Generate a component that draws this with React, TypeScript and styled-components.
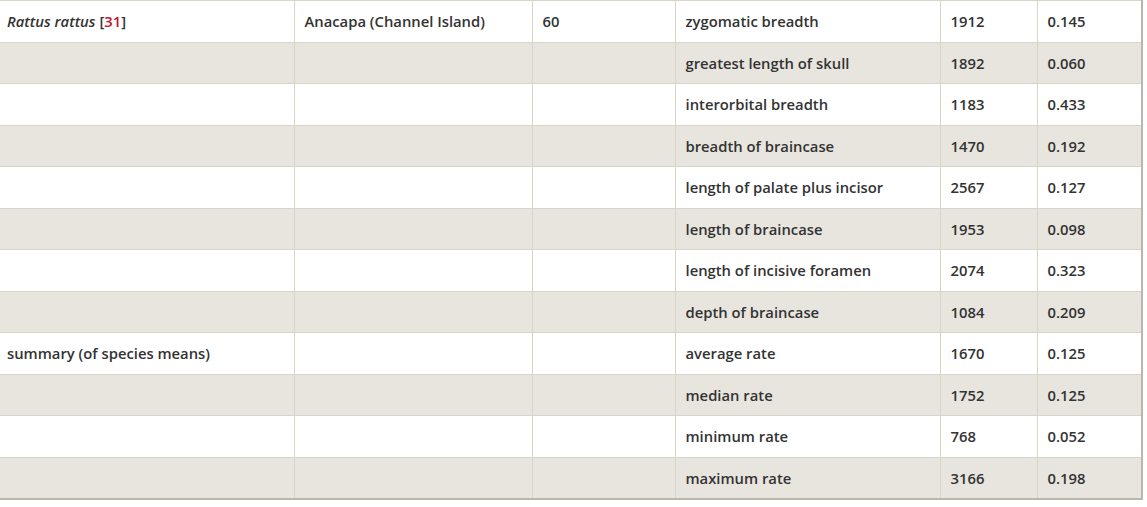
import React from "react";
import styled, { createGlobalStyle } from "styled-components";

const Global = createGlobalStyle`
  html, body { margin: 0; padding: 0; background: #fff; }
  body { font-family: "Open Sans", "Liberation Sans", sans-serif; overflow: hidden; }
`;

const Table = styled.table`
  border-collapse: collapse;
  table-layout: fixed;
  width: 1145px;
  margin-left: -3px;
  border-right: 2px solid #b9b6ad;
  border-bottom: 2px solid #b9b6ad;
  color: #333;
  font-size: 14.8px;
  font-weight: 600;
`;

const Col = styled.col<{ $w: number }>`
  width: ${(p) => p.$w}px;
`;

const Row = styled.tr<{ $shaded: boolean }>`
  height: 41.5px;
  background: ${(p) => (p.$shaded ? "#e8e5df" : "#ffffff")};
`;

const Cell = styled.td`
  border: 1px solid #d8d4c6;
  padding: 0 10px;
  vertical-align: middle;
  white-space: nowrap;
  &:first-child { border-left: none; }
`;

const Species = styled.em`
  font-style: italic;
`;

const Ref = styled.span`
  color: #c41230;
`;

const widths = [297, 238, 143, 265, 97, 105];

const rows: [string, string, string][] = [
  ["zygomatic breadth", "1912", "0.145"],
  ["greatest length of skull", "1892", "0.060"],
  ["interorbital breadth", "1183", "0.433"],
  ["breadth of braincase", "1470", "0.192"],
  ["length of palate plus incisor", "2567", "0.127"],
  ["length of braincase", "1953", "0.098"],
  ["length of incisive foramen", "2074", "0.323"],
  ["depth of braincase", "1084", "0.209"],
  ["average rate", "1670", "0.125"],
  ["median rate", "1752", "0.125"],
  ["minimum rate", "768", "0.052"],
  ["maximum rate", "3166", "0.198"],
];

export default function App() {
  return (
    <>
      <Global />
      <Table>
        <colgroup>
          {widths.map((w, i) => (
            <Col key={i} $w={w} />
          ))}
        </colgroup>
        <tbody>
          {rows.map((r, i) => (
            <Row key={i} $shaded={i % 2 === 1}>
              <Cell>
                {i === 0 && (
                  <>
                    <Species>Rattus rattus</Species> [<Ref>31</Ref>]
                  </>
                )}
                {i === 8 && "summary (of species means)"}
              </Cell>
              <Cell>{i === 0 ? "Anacapa (Channel Island)" : ""}</Cell>
              <Cell>{i === 0 ? "60" : ""}</Cell>
              <Cell>{r[0]}</Cell>
              <Cell>{r[1]}</Cell>
              <Cell>{r[2]}</Cell>
            </Row>
          ))}
        </tbody>
      </Table>
    </>
  );
}
